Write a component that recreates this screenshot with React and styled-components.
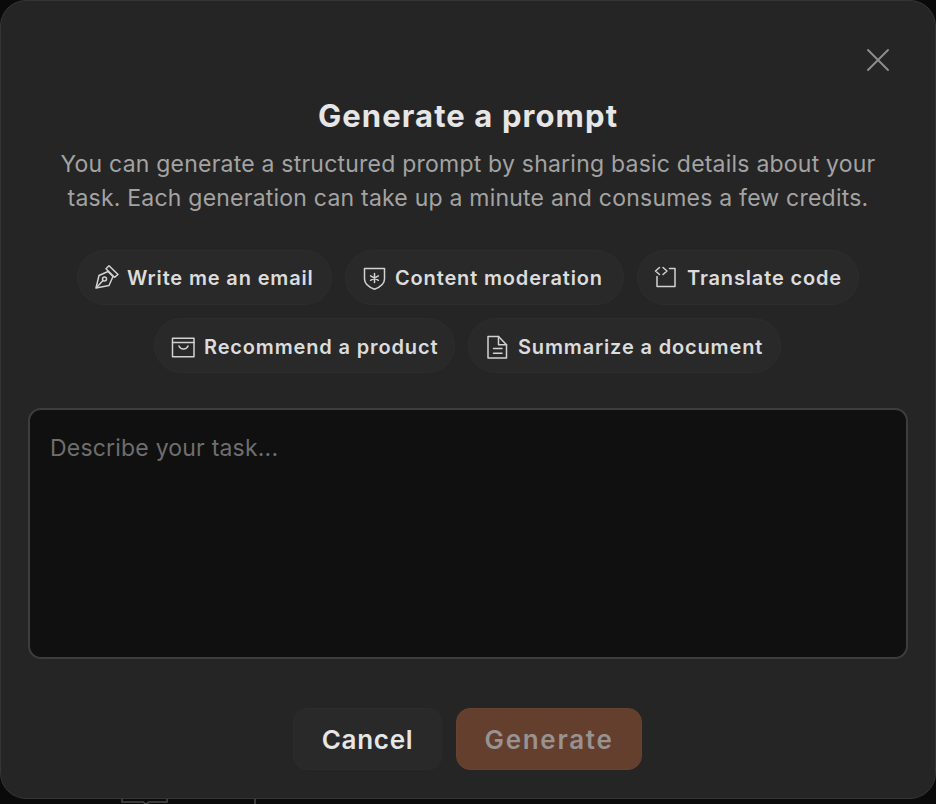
import React from "react";
import styled, { createGlobalStyle } from "styled-components";

const Global = createGlobalStyle`
  html, body { margin: 0; padding: 0; background: #0a0a0a; }
  body { width: 936px; height: 804px; overflow: hidden; font-family: Inter, "Liberation Sans", sans-serif; }
  * { box-sizing: border-box; }
`;

const Page = styled.div`
  position: relative;
  width: 936px;
  height: 804px;
  background: #0a0a0a;
`;

const Dialog = styled.section`
  width: 936px;
  height: 799px;
  display: flex;
  flex-direction: column;
  align-items: center;
  background: #252525;
  border: 1px solid #353535;
  border-radius: 26px;
  padding: 96px 27px 0;
  position: relative;
`;

const Close = styled.button`
  position: absolute;
  top: 46px;
  right: 44px;
  width: 26px;
  height: 26px;
  padding: 0;
  background: none;
  border: 0;
  color: #8c8c8c;
  display: flex;
`;

const Title = styled.h1`
  margin: 0;
  font-family: Inter, sans-serif;
  font-weight: 700;
  font-size: 31px;
  line-height: 38px;
  letter-spacing: 1.1px;
  color: #e6e6e6;
`;

const Subtitle = styled.p`
  margin: 12px 0 0;
  font-size: 23px;
  line-height: 34px;
  letter-spacing: 0.22px;
  font-weight: 400;
  text-align: center;
  color: #a3a3a3;
  white-space: nowrap;
`;

const Chips = styled.div`
  margin-top: 35px;
  display: flex;
  flex-direction: column;
  gap: 13px;
  align-items: center;
`;

const ChipRow = styled.div`
  display: flex;
  gap: 13px;
  margin-right: ${p => (p.$odd ? 1 : 0)}px;
`;

const Chip = styled.button`
  height: 55px;
  width: ${p => p.$w}px;
  padding: ${p => (p.$low ? 2 : 0)}px 0 0 16px;
  display: flex;
  align-items: center;
  gap: 7px;
  border-radius: 28px;
  background: #292929;
  border: 1px solid #2d2d2d;
  color: #dcdcdc;
  font-family: Inter, sans-serif;
  font-size: 20px;
  font-weight: 600;
  letter-spacing: 0.85px;
  white-space: nowrap;
`;

const Icon = styled.svg`
  width: 26px;
  height: 26px;
  flex: none;
  fill: none;
  stroke: #d2d2d2;
  stroke-width: 1.5;
  stroke-linecap: round;
  stroke-linejoin: round;
`;

const Task = styled.textarea`
  display: block;
  width: 880px;
  height: 251px;
  margin-top: 35px;
  padding: 23px 20px;
  resize: none;
  outline: none;
  background: #101010;
  border: 2px solid #3d3d3d;
  border-radius: 13px;
  color: #e6e6e6;
  font-family: Inter, sans-serif;
  font-size: 23px;
  line-height: 30px;
  letter-spacing: 0.2px;
  &::placeholder { color: #6e6e6e; opacity: 1; }
`;

const Actions = styled.div`
  margin-top: 49px;
  margin-right: 1px;
  display: flex;
  gap: 14px;
`;

const Button = styled.button`
  height: 62px;
  width: ${p => p.$w}px;
  border-radius: 14px;
  padding: 0;
  font-family: Inter, sans-serif;
  font-weight: 600;
  font-size: 26px;
  letter-spacing: ${p => (p.$primary ? 1.7 : 0.7)}px;
  background: ${p => (p.$primary ? "#643f2e" : "#292929")};
  border: 1px solid ${p => (p.$primary ? "#684231" : "#2c2c2c")};
  color: ${p => (p.$primary ? "#989290" : "#e6e6e6")};
`;

const Behind = styled.svg`
  position: absolute;
  left: 120px;
  top: 798px;
  width: 140px;
  height: 6px;
  fill: none;
  stroke: #4a4a4a;
  stroke-width: 1.5;
`;

const chips = [
  [
    { w: 255, label: "Write me an email", icon: <><path d="M2 23 5 10.500 14 6.500l5 5-4 9-13 2.500Z" /><path d="m15 .8 9 8.700-3.500 2.800-8.500-8.500L15 .8Z" /><circle cx="10.500" cy="14" r="2" /><path d="m2.500 22.500 6.500-7" /></> },
    { w: 279, label: "Content moderation", icon: <><path d="M2.500 3.500h20v10.500c0 5-4 8-10 10.200-6-2.200-10-5.200-10-10.200V3.500Z" /><path d="M12.500 8.500v9M8.600 10.800l7.800 4.500M16.400 10.800l-7.800 4.500" /></> },
    { w: 222, label: "Translate code", icon: <><path d="M15.500 3.500H21v18H3v-10" /><path d="M5.500 2.500 1.500 6l4 3.500M9 2.500 13 6 9 9.500" /></> },
  ],
  [
    { w: 301, label: "Recommend a product", icon: <><path d="M1.500 4.200h21.500v18.500H1.500V4.200Z" /><path d="M1.500 8.500H23" /><path d="M8 12c1.500 4 7.500 4 9 0" /></> },
    { w: 313, label: "Summarize a document", icon: <><path d="M3 2.500h10.500l8 8.300V24H3V2.500Z" /><path d="M13.500 2.500v8.300h8" /><path d="M8.500 14.500h8.500M8.500 19.200h8.500" /></> },
  ],
];

export default function App() {
  return (
    <Page>
      <Global />
      <Behind viewBox="0 0 140 6" aria-hidden="true">
        <path d="M2 0v4h21l3 2 3-2h18V0" />
        <path d="M135 0v6" />
      </Behind>
      <Dialog>
        <Close aria-label="Close">
          <svg width="26" height="26" viewBox="0 0 26 26" fill="none" stroke="currentColor" strokeWidth="2" strokeLinecap="round">
            <path d="M3 3l20 20M23 3 3 23" />
          </svg>
        </Close>
        <Title>Generate a prompt</Title>
        <Subtitle>
          You can generate a structured prompt by sharing basic details about your
          <br />
          task. Each generation can take up a minute and consumes a few credits.
        </Subtitle>
        <Chips>
          {chips.map((row, i) => (
            <ChipRow key={i} $odd={row.length === 2}>
              {row.map(c => (
                <Chip key={c.label} $w={c.w} $low={row.length === 2}>
                  <Icon viewBox="0 0 26 26" aria-hidden="true">{c.icon}</Icon>
                  {c.label}
                </Chip>
              ))}
            </ChipRow>
          ))}
        </Chips>
        <Task placeholder="Describe your task..." />
        <Actions>
          <Button $w={149}>Cancel</Button>
          <Button $w={186} $primary>Generate</Button>
        </Actions>
      </Dialog>
    </Page>
  );
}
